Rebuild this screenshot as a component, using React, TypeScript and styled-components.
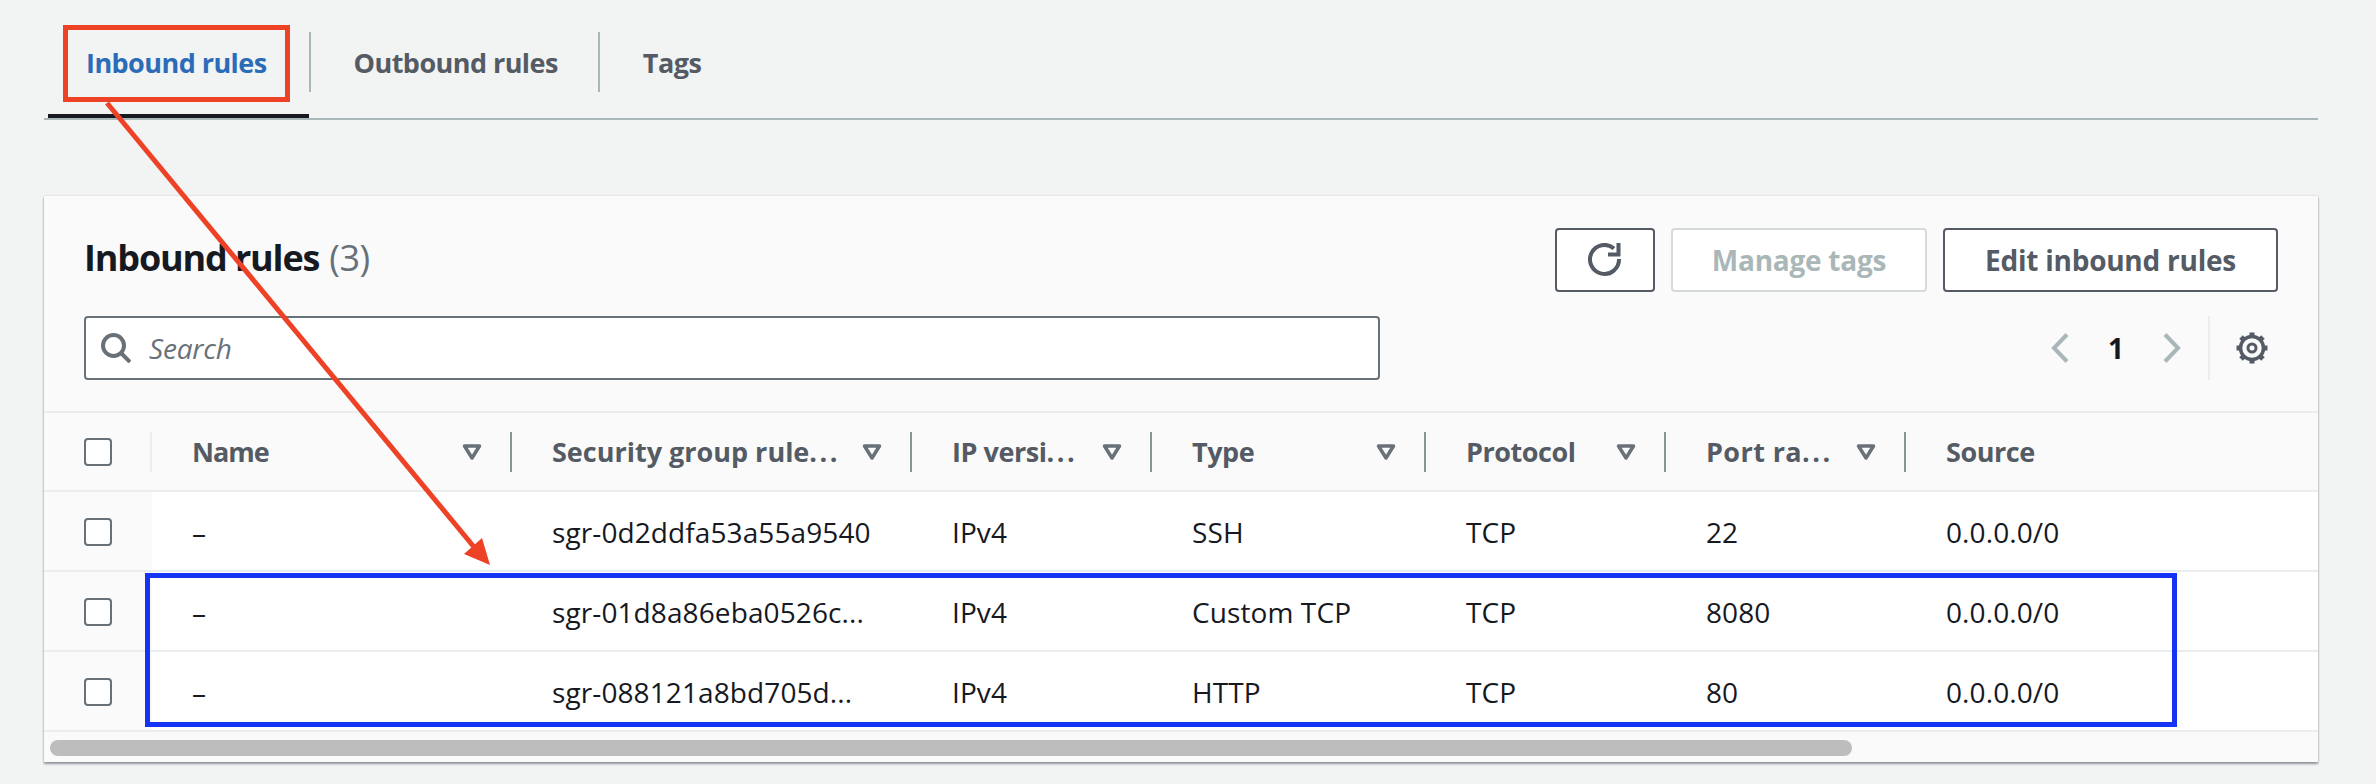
import { Fragment } from 'react'
import styled, { createGlobalStyle } from 'styled-components'

const GlobalStyle = createGlobalStyle`
  html, body {
    margin: 0;
    padding: 0;
    background: #f2f3f3;
  }
  body {
    font-family: "Open Sans", "Noto Sans", sans-serif;
    color: #16191f;
  }
`

const Page = styled.div`
  position: relative;
  width: 2376px;
  height: 784px;
  overflow: hidden;
  padding: 0 58px 0 44px;
  box-sizing: border-box;
`

const TabBar = styled.div`
  display: flex;
  height: 120px;
  border-bottom: 2px solid #aab7b8;
  box-sizing: border-box;
  padding-left: 4px;
`

const Tab = styled.div<{ $active?: boolean }>`
  position: relative;
  display: flex;
  align-items: center;
  height: 118px;
  padding: 0 ${(p) => (p.$active ? '42px' : '40px')} 0 ${(p) => (p.$active ? '38px' : '43px')};
  font-size: 27px;
  font-weight: 700;
  letter-spacing: -0.55px;
  color: ${(p) => (p.$active ? '#2b6cb8' : '#545b64')};
  box-sizing: border-box;

  ${(p) => p.$active && `
    &::after {
      content: "";
      position: absolute;
      left: 0;
      right: 0;
      bottom: 0;
      height: 4px;
      background: #16191f;
    }
  `}
`

const TabLabel = styled.span`
  margin-top: 6px;
`

const TabDivider = styled.div`
  width: 2px;
  height: 60px;
  margin-top: 32px;
  background: #aab7b8;
`

const Card = styled.div`
  margin-top: 76px;
  height: 566px;
  background: #fafafa;
  box-shadow: 0 2px 2px rgba(84, 91, 100, 0.6), 0 0 2px rgba(84, 91, 100, 0.25);
  display: flex;
  flex-direction: column;
`

const CardHeader = styled.div`
  height: 217px;
  padding: 32px 40px 0 40px;
  box-sizing: border-box;
  border-bottom: 2px solid #eaeded;
`

const TitleRow = styled.div`
  display: flex;
  justify-content: space-between;
  align-items: center;
  height: 64px;
`

const Title = styled.h2`
  margin: -5px 0 0;
  font-size: 36px;
  font-weight: 700;
  letter-spacing: -1.15px;
  color: #16191f;
`

const Count = styled.span`
  font-weight: 400;
  letter-spacing: -0.5px;
  color: #687078;
  margin-left: 10px;
`

const Actions = styled.div`
  display: flex;
  gap: 16px;
`

const Button = styled.div<{ $disabled?: boolean; $width: number }>`
  display: flex;
  align-items: center;
  justify-content: center;
  width: ${(p) => p.$width}px;
  height: 64px;
  box-sizing: border-box;
  background: #fff;
  border: 2px solid ${(p) => (p.$disabled ? '#d5dbdb' : '#545b64')};
  border-radius: 4px;
  font-size: 28px;
  font-weight: 700;
  letter-spacing: -0.25px;
  color: ${(p) => (p.$disabled ? '#aab7b8' : '#545b64')};
`

const SearchRow = styled.div`
  display: flex;
  align-items: center;
  justify-content: space-between;
  margin-top: 24px;
  height: 64px;
`

const SearchBox = styled.div`
  display: flex;
  align-items: center;
  gap: 18px;
  width: 1296px;
  height: 64px;
  padding-left: 15px;
  box-sizing: border-box;
  background: #fff;
  border: 2px solid #687078;
  border-radius: 4px;
  font-size: 28px;
  font-style: italic;
  letter-spacing: -0.2px;
  color: #687078;
`

const Pager = styled.div`
  display: flex;
  align-items: center;
  height: 64px;
  margin-right: 10px;
`

const PageNumber = styled.span`
  width: 94px;
  text-align: center;
  font-size: 28px;
  font-weight: 700;
  color: #16191f;
`

const PagerDivider = styled.div`
  width: 2px;
  height: 64px;
  margin: 0 26px 0 27px;
  background: #eaeded;
`

const Grid = styled.div`
  display: grid;
  grid-template-columns: 108px 360px 400px 240px 274px 240px 240px 1fr;
`

const HeadCell = styled.div`
  display: flex;
  align-items: center;
  height: 79px;
  padding-left: 40px;
  box-sizing: border-box;
  border-bottom: 2px solid #eaeded;
  font-size: 27px;
  font-weight: 700;
  letter-spacing: -0.45px;
  color: #545b64;
`

const HeadLabel = styled.span<{ $spacing?: number }>`
  flex: 1;
  white-space: nowrap;
  letter-spacing: ${(p) => p.$spacing ?? -0.45}px;
`

const Dots = styled.span`
  letter-spacing: 2.5px;
`

const FilterMark = styled.svg`
  margin-right: 27px;
  flex-shrink: 0;
`

const HeadDivider = styled.div<{ $light?: boolean }>`
  flex-shrink: 0;
  width: 2px;
  height: 40px;
  background: ${(p) => (p.$light ? '#eaeded' : '#879596')};
`

const BodyCell = styled.div<{ $check?: boolean }>`
  display: flex;
  align-items: center;
  height: 80px;
  padding: 2px 0 0 40px;
  box-sizing: border-box;
  border-bottom: 2px solid #eaeded;
  background: ${(p) => (p.$check ? 'transparent' : '#fff')};
  font-size: 28px;
  letter-spacing: 0.1px;
  color: #16191f;
`

const Checkbox = styled.div`
  width: 28px;
  height: 28px;
  box-sizing: border-box;
  background: #fff;
  border: 2px solid #687078;
  border-radius: 4px;
`

const Track = styled.div`
  padding: 8px 6px 6px;
`

const Thumb = styled.div`
  width: 1802px;
  height: 16px;
  border-radius: 8px;
  background: #bdbdbd;
`

const RedBox = styled.div`
  position: absolute;
  left: 63px;
  top: 25px;
  width: 227px;
  height: 77px;
  box-sizing: border-box;
  border: 5px solid #ee4227;
`

const BlueBox = styled.div`
  position: absolute;
  left: 145px;
  top: 573px;
  width: 2032px;
  height: 154px;
  box-sizing: border-box;
  border: 5px solid #1433f5;
`

const ArrowLayer = styled.svg`
  position: absolute;
  left: 0;
  top: 0;
  pointer-events: none;
`

const FilterIcon = () => (
  <FilterMark width="22" height="18" viewBox="0 0 22 18">
    <path d="M3.500 3h15L11 15z" fill="none" stroke="#687078" strokeWidth="3.500" strokeLinejoin="round" />
  </FilterMark>
)

const SearchIcon = () => (
  <svg width="30" height="30" viewBox="0 0 30 30">
    <circle cx="12.500" cy="12.500" r="10.500" fill="none" stroke="#687078" strokeWidth="4" />
    <path d="M20 20l9 9" stroke="#687078" strokeWidth="4" />
  </svg>
)

const RefreshIcon = () => (
  <svg width="34" height="34" viewBox="0 0 34 34">
    <path d="M26 5.500A14.500 14.500 0 1 0 31 16" fill="none" stroke="#545b64" strokeWidth="4" />
    <path d="M30.500 0v11.500H20" fill="none" stroke="#545b64" strokeWidth="4" />
  </svg>
)

const Chevron = ({ left }: { left?: boolean }) => (
  <svg width="18" height="30" viewBox="0 0 18 30">
    <path d={left ? 'M16 1.500 3 15l13 13.500' : 'M2 1.500 15 15 2 28.500'} fill="none" stroke="#aab7b8" strokeWidth="4" />
  </svg>
)

const GearIcon = () => (
  <svg width="32" height="32" viewBox="0 0 32 32">
    {[0, 45, 90, 135, 180, 225, 270, 315].map((deg) => (
      <path key={deg} d="M16 0.500v5" stroke="#545b64" strokeWidth="5" transform={`rotate(${deg} 16 16)`} />
    ))}
    <circle cx="16" cy="16" r="11.500" fill="#fafafa" stroke="#545b64" strokeWidth="3.500" />
    <circle cx="16" cy="16" r="4" fill="none" stroke="#545b64" strokeWidth="3" />
  </svg>
)

const columns = [
  { label: 'Name', spacing: -1 },
  { label: 'Security group rule', cut: true, spacing: 0 },
  { label: 'IP versi', cut: true },
  { label: 'Type' },
  { label: 'Protocol' },
  { label: 'Port ra', cut: true, spacing: 0.4 },
]

const rows = [
  ['–', 'sgr-0d2ddfa53a55a9540', 'IPv4', 'SSH', 'TCP', '22', '0.0.0.0/0'],
  ['–', 'sgr-01d8a86eba0526c...', 'IPv4', 'Custom TCP', 'TCP', '8080', '0.0.0.0/0'],
  ['–', 'sgr-088121a8bd705d...', 'IPv4', 'HTTP', 'TCP', '80', '0.0.0.0/0'],
]

export default function App() {
  return (
    <Page>
      <GlobalStyle />
      <TabBar>
        <Tab $active><TabLabel>Inbound rules</TabLabel></Tab>
        <TabDivider />
        <Tab><TabLabel>Outbound rules</TabLabel></Tab>
        <TabDivider />
        <Tab><TabLabel>Tags</TabLabel></Tab>
      </TabBar>

      <Card>
        <CardHeader>
          <TitleRow>
            <Title>Inbound rules<Count>(3)</Count></Title>
            <Actions>
              <Button $width={100}><RefreshIcon /></Button>
              <Button $width={256} $disabled>Manage tags</Button>
              <Button $width={335}>Edit inbound rules</Button>
            </Actions>
          </TitleRow>
          <SearchRow>
            <SearchBox><SearchIcon />Search</SearchBox>
            <Pager>
              <Chevron left />
              <PageNumber>1</PageNumber>
              <Chevron />
              <PagerDivider />
              <GearIcon />
            </Pager>
          </SearchRow>
        </CardHeader>

        <Grid>
          <HeadCell>
            <HeadLabel><Checkbox /></HeadLabel>
            <HeadDivider $light />
          </HeadCell>
          {columns.map((col) => (
            <HeadCell key={col.label}>
              <HeadLabel $spacing={col.spacing}>{col.label}{col.cut && <Dots>...</Dots>}</HeadLabel>
              <FilterIcon />
              <HeadDivider />
            </HeadCell>
          ))}
          <HeadCell>Source</HeadCell>
          {rows.map((row) => (
            <Fragment key={row[1]}>
              <BodyCell $check><Checkbox /></BodyCell>
              {row.map((value, i) => (
                <BodyCell key={i}>{value}</BodyCell>
              ))}
            </Fragment>
          ))}
        </Grid>
        <Track><Thumb /></Track>
      </Card>

      <RedBox />
      <BlueBox />
      <ArrowLayer width="2376" height="784" viewBox="0 0 2376 784">
        <path d="M107 103 474 547" stroke="#ee4227" strokeWidth="5" fill="none" />
        <path d="M490 565 482 538 464 554z" fill="#ee4227" />
      </ArrowLayer>
    </Page>
  )
}
